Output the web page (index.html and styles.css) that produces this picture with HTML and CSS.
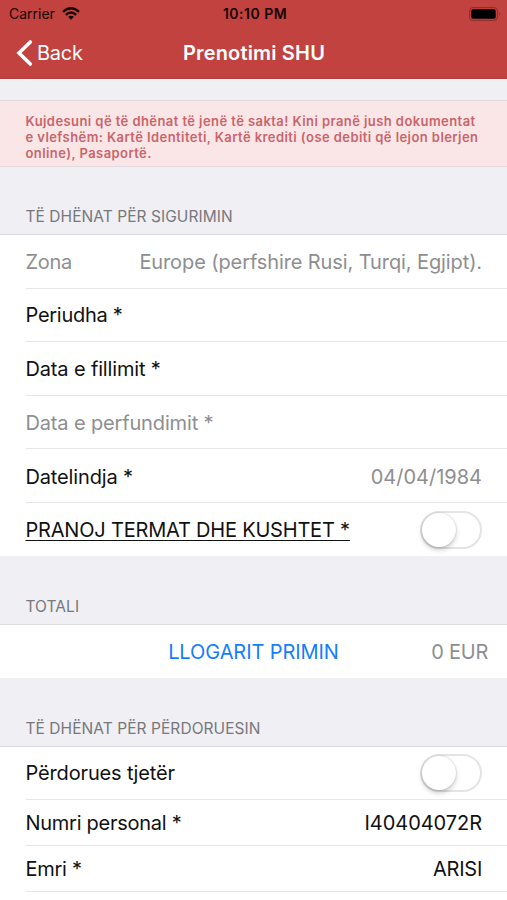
FILE: index.html
```html
<!DOCTYPE html>
<html lang="sq">
<head>
<meta charset="utf-8">
<title>Prenotimi SHU</title>
<link rel="stylesheet" href="styles.css">
</head>
<body>
<header class="header">
  <div class="status">
    <div class="carrier"><span>Carrier</span>
      <svg class="wifi" width="18" height="13" viewBox="0 0 18 13" fill="none" stroke="#160303" stroke-width="2.3"><path d="M1 4.8Q9-2.2 17 4.8M3.8 7.8Q9 3.2 14.2 7.8"/><path d="M6.1 9.8Q9 7.5 11.9 9.8L9 12.8Z" fill="#160303" stroke="none"/></svg>
    </div>
    <span class="clock">10:10 PM</span>
    <svg class="battery" width="32" height="14" viewBox="0 0 32 14"><rect x=".6" y=".6" width="27.8" height="12.8" rx="3.2" fill="none" stroke="#8c2c2a"/><rect x="2.3" y="2.3" width="24.4" height="9.4" rx="1.6" fill="#000"/><path d="M30 5q1.5 2 0 4Z" fill="#7c2524"/></svg>
  </div>
  <nav class="nav">
    <a class="back"><svg width="17" height="28" viewBox="0 0 17 28" fill="none" stroke="#fff" stroke-width="3.6" stroke-linecap="round"><path d="M14.3 3 3 14 14.3 25"/></svg><span>Back</span></a>
    <h1 class="title">Prenotimi SHU</h1>
  </nav>
</header>
<main>
  <p class="notice">Kujdesuni që të dhënat të jenë të sakta! Kini pranë jush dokumentat<br>e vlefshëm: Kartë Identiteti, Kartë krediti (ose debiti që lejon blerjen<br>online), Pasaportë.</p>
  <h2 class="section first">TË DHËNAT PËR SIGURIMIN</h2>
  <div class="group">
    <div class="row muted"><span>Zona</span><span class="europe">Europe (perfshire Rusi, Turqi, Egjipt).</span></div>
    <div class="row"><span>Periudha *</span></div>
    <div class="row"><span class="loose">Data e fillimit *</span></div>
    <div class="row muted"><span class="loose">Data e perfundimit *</span></div>
    <div class="row lower"><span class="loose">Datelindja *</span><span class="muted date">04/04/1984</span></div>
    <div class="row lower"><span class="terms">PRANOJ TERMAT DHE KUSHTET *</span><span class="switch"></span></div>
  </div>
  <h2 class="section">TOTALI</h2>
  <div class="group">
    <div class="row total"><span class="action">LLOGARIT PRIMIN</span><span class="muted price">0 EUR</span></div>
  </div>
  <h2 class="section">TË DHËNAT PËR PËRDORUESIN</h2>
  <div class="group">
    <div class="row user"><span class="loose">Përdorues tjetër</span><span class="switch"></span></div>
    <div class="row short"><span>Numri personal *</span><span class="idno">I40404072R</span></div>
    <div class="row short"><span>Emri *</span><span>ARISI</span></div>
    <div class="row last"></div>
  </div>
</main>
</body>
</html>
```

FILE: styles.css
```css
* { box-sizing: border-box; }
html, body { margin: 0; height: 900px; overflow: hidden; }
body {
  background: #efeff4;
  color: #111;
  font: 400 20px/24px Inter, "Liberation Sans", sans-serif;
  letter-spacing: -0.27px;
  white-space: nowrap;
}
.header { height: 79px; background: #c1423f; border-bottom: 1px solid #b14140; }
.status {
  display: grid;
  grid-template-columns: 1fr auto 1fr;
  align-items: center;
  height: 27px;
  padding: 0 6px 0 9px;
  color: #160303;
  font-size: 14px;
  letter-spacing: 0;
}
.carrier { display: flex; align-items: center; gap: 7px; }
.clock { font-weight: 600; letter-spacing: 0.5px; }
.battery { justify-self: end; }
.nav {
  display: grid;
  grid-template-columns: 1fr auto 1fr;
  align-items: center;
  height: 51px;
  padding: 0 15px 0 16px;
  color: #fff;
}
.back { display: flex; align-items: center; gap: 4px; }
.title { margin: 0; font-size: 20px; font-weight: 600; line-height: 24px; letter-spacing: 0.17px; }
.notice {
  height: 67px;
  margin: 21px 0 0;
  padding: 12px 25.5px 0;
  background: #fae6e7;
  border: solid #e3dade;
  border-width: 1px 0;
  color: #c9656b;
  font-size: 13px;
  font-weight: 600;
  line-height: 16px;
  letter-spacing: 0.425px;
}
.section {
  height: 68px;
  margin: 0;
  padding: 41px 25.5px 0;
  color: #77777c;
  font-size: 15.5px;
  font-weight: 400;
  line-height: 20px;
  letter-spacing: 0.06px;
}
.first { height: 67px; padding-top: 40px; }
.group { background: #fff; border-top: 1px solid #dcdce0; }
.row {
  display: flex;
  align-items: center;
  justify-content: space-between;
  height: 53.5px;
  margin-left: 25.5px;
  padding: 1px 25px 0 0;
  border-bottom: 1px solid #e6e6e8;
}
.row:last-child { border-bottom-color: #fff; }
.row.muted { padding-top: 2px; }
.row.lower { padding-top: 3px; }
.muted { color: #8e8e91; }
.loose { letter-spacing: -0.15px; }
.europe { letter-spacing: -0.1px; }
.date { letter-spacing: 0; }
.idno { letter-spacing: -0.05px; }
.terms { letter-spacing: -0.2px; text-decoration: underline; text-decoration-thickness: 1.4px; text-underline-offset: 3px; text-decoration-skip-ink: none; }
.switch {
  width: 62px;
  height: 38px;
  margin-top: -1px;
  border: 2px solid #e4e4e5;
  border-radius: 19px;
  background: #fff;
}
.switch::before {
  content: "";
  display: block;
  width: 34px;
  height: 34px;
  border-radius: 50%;
  background: #fff;
  box-shadow: 0 3px 5px rgba(0, 0, 0, .2), 0 0 2px rgba(0, 0, 0, .2);
}
.total {
  display: grid;
  grid-template-columns: 1fr auto 1fr;
  height: 53px;
  margin-left: 0;
  padding: 1px 19px 0;
}
.action { grid-column: 2; color: #147efb; letter-spacing: -0.08px; }
.price { justify-self: end; }
.user { height: 53px; padding-top: 0; }
.short { height: 46px; padding-top: 0; }
.last { height: 9px; }
```
